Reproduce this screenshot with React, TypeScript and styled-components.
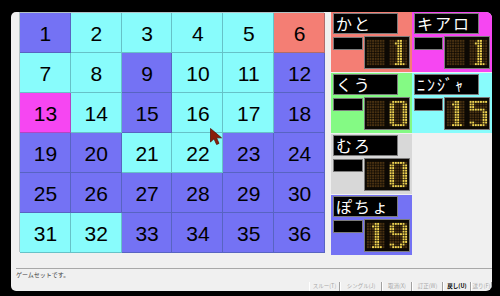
import React from "react";
import styled, { createGlobalStyle } from "styled-components";

const Global = createGlobalStyle`
  html, body { margin: 0; padding: 0; background: #000; }
  body { width: 500px; height: 296px; overflow: hidden; font-family: "Liberation Sans", "Noto Sans CJK JP", sans-serif; }
`;

const Screen = styled.div`
  width: 500px;
  height: 296px;
  background: #000;
  padding: 12px 0 0 11px;
  box-sizing: border-box;
`;

const Window = styled.div`
  width: 481px;
  height: 279px;
  background: #f0f0f0;
  border-radius: 5px 6px 6px 5px;
  display: flex;
  flex-direction: column;
  overflow: hidden;
`;

const Main = styled.div`
  display: flex;
  height: 256px;
`;

const Board = styled.div`
  position: relative;
  margin: 1px 0 0 9px;
  width: 305px;
  height: 240px;
  display: grid;
  grid-template-columns: repeat(6, 1fr);
  grid-template-rows: repeat(6, 40px);
  box-shadow: -1px -1px 0 rgba(40, 90, 100, 0.3);
`;

const Cell = styled.div<{ $c: string }>`
  background: ${(p) => p.$c};
  box-shadow: inset -1px -1px 0 rgba(30, 70, 90, 0.32);
  display: flex;
  align-items: center;
  justify-content: center;
  font-family: "Liberation Sans", sans-serif;
  font-size: 21px;
  color: #000;
  padding-top: 2px;
  box-sizing: border-box;
`;

const Cursor = styled.svg`
  position: absolute;
  left: 190px;
  top: 115px;
  width: 13px;
  height: 18px;
`;

const Panels = styled.div`
  margin-left: 6px;
  display: grid;
  grid-template-columns: 81px 80px;
  grid-auto-rows: 60px;
  row-gap: 1px;
  align-content: start;
`;

const Panel = styled.div<{ $c: string }>`
  background: ${(p) => p.$c};
  padding: 1px 2px;
  box-sizing: border-box;
  display: flex;
  flex-direction: column;
  gap: 2px;
`;

const NameBox = styled.div`
  width: 65px;
  height: 21px;
  box-sizing: border-box;
  background: #000;
  border: 1px solid #7c7c7c;
  color: #fff;
  font-family: "Noto Sans CJK JP", sans-serif;
  font-size: 16px;
  line-height: 19px;
  letter-spacing: 2px;
  padding-left: 2px;
  white-space: nowrap;
`;

const Lower = styled.div`
  display: flex;
  align-items: flex-start;
  gap: 1px;
`;

const SmallBox = styled.div`
  width: 30px;
  height: 13px;
  margin-top: 1px;
  box-sizing: border-box;
  background: #000;
  border: 1px solid #7c7c7c;
`;

const Led = styled.div`
  width: 46px;
  height: 33px;
  box-sizing: border-box;
  background: #0d0904;
  border: 1px solid #7c7c7c;
  display: flex;
`;

const Status = styled.div`
  margin-left: 5px;
  height: 14px;
  box-sizing: border-box;
  border-top: 1px solid #a8a8a8;
  font-family: "Noto Sans CJK JP", sans-serif;
  font-size: 6px;
  line-height: 9px;
  color: #444;
  padding-top: 1px;
`;

const ButtonRow = styled.div`
  display: flex;
  justify-content: flex-end;
  height: 9px;
`;

const Btn = styled.div<{ $w: number; $on?: boolean }>`
  width: ${(p) => p.$w}px;
  height: 9px;
  box-sizing: border-box;
  border-left: 1px solid #fff;
  border-right: 1px solid #a0a0a0;
  font-family: "Noto Sans CJK JP", sans-serif;
  font-size: 5.5px;
  line-height: 9px;
  text-align: center;
  white-space: nowrap;
  color: ${(p) => (p.$on ? "#000" : "#a8a8a8")};
  font-weight: ${(p) => (p.$on ? 700 : 400)};
`;

const C = "#88fcfc";
const P = "#7472f4";
const M = "#f646f2";
const S = "#f47e74";
const G = "#84fa84";
const Y = "#d8d8d8";

const cells = [
  P, C, C, C, C, S,
  C, C, P, C, C, P,
  M, C, P, C, C, P,
  P, P, C, C, P, P,
  P, P, P, P, P, P,
  C, C, P, P, P, P,
];

const players = [
  { name: "かと", c: S, score: 1 },
  { name: "キアロ", c: M, score: 1 },
  { name: "くう", c: G, score: 0 },
  { name: "ﾆﾝｼﾞｬ", c: C, score: 15 },
  { name: "むろ", c: Y, score: 0 },
  null,
  { name: "ぽちょ", c: P, score: 19 },
];

const FONT: Record<string, string[]> = {
  "0": [
    ".#####.",
    "##...##",
    "##...##",
    "##...##",
    "##...##",
    "##...##",
    "##...##",
    "##...##",
    "##...##",
    ".#####.",
  ],
  "1": [
    "...##..",
    "..###..",
    "...##..",
    "...##..",
    "...##..",
    "...##..",
    "...##..",
    "...##..",
    "...##..",
    "..####.",
  ],
  "5": [
    "#######",
    "##.....",
    "##.....",
    "######.",
    ".....##",
    ".....##",
    ".....##",
    ".....##",
    "##...##",
    ".#####.",
  ],
  "9": [
    ".#####.",
    "##...##",
    "##...##",
    "##...##",
    ".######",
    ".....##",
    ".....##",
    ".....##",
    "##..##.",
    ".####..",
  ],
};

function LedDisplay({ score }: { score: number }) {
  const s = String(score);
  const digits = s.length === 1 ? [null, s] : [s[0], s[1]];
  const dots: React.ReactElement[] = [];
  digits.forEach((d, di) => {
    const ox = di === 0 ? 0.6 : 9.4;
    for (let r = 0; r < 10; r++) {
      for (let col = 0; col < 7; col++) {
        const lit = d !== null && FONT[d][r][col] === "#";
        dots.push(
          <rect
            key={`${di}-${r}-${col}`}
            x={ox + col + 0.12}
            y={1 + r + 0.12}
            width={0.76}
            height={0.76}
            fill={lit ? "#f2d452" : "#4a3212"}
          />
        );
      }
    }
  });
  return (
    <Led>
      <svg width="44" height="31" viewBox="0 0 17 12">
        {dots}
      </svg>
    </Led>
  );
}

export default function App() {
  return (
    <>
      <Global />
      <Screen>
        <Window>
          <Main>
            <Board>
              {cells.map((c, i) => (
                <Cell key={i} $c={c}>
                  {i + 1}
                </Cell>
              ))}
              <Cursor viewBox="0 0 13 18">
                <path
                  d="M0.5 0.5 L0.5 14 L4 10.8 L6.6 16.5 L9 15.4 L6.5 9.8 L11.5 9.8 Z"
                  fill="#8a1f0a"
                  stroke="#5a1205"
                  strokeWidth="0.8"
                />
              </Cursor>
            </Board>
            <Panels>
              {players.map((p, i) =>
                p ? (
                  <Panel key={i} $c={p.c}>
                    <NameBox>{p.name}</NameBox>
                    <Lower>
                      <SmallBox />
                      <LedDisplay score={p.score} />
                    </Lower>
                  </Panel>
                ) : (
                  <div key={i} />
                )
              )}
            </Panels>
          </Main>
          <Status>ゲームセットです。</Status>
          <ButtonRow>
            <Btn $w={31}>スルー(T)</Btn>
            <Btn $w={42}>シングル(J)</Btn>
            <Btn $w={30}>取消(X)</Btn>
            <Btn $w={31}>訂正(W)</Btn>
            <Btn $w={28} $on>
              戻し(U)
            </Btn>
            <Btn $w={21}>送り(F)</Btn>
          </ButtonRow>
        </Window>
      </Screen>
    </>
  );
}
